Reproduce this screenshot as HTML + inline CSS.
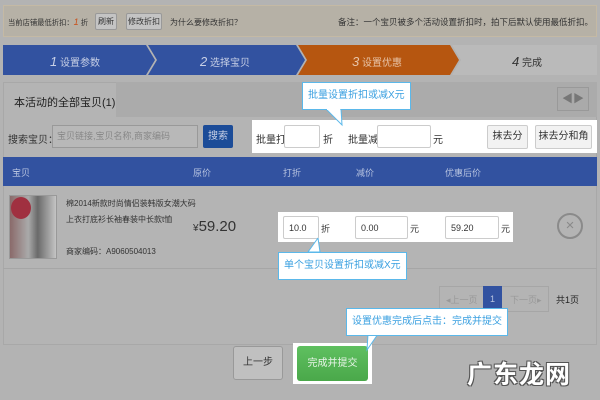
<!DOCTYPE html>
<html><head><meta charset="utf-8"><style>
*{margin:0;padding:0;box-sizing:border-box}
body{width:600px;height:400px;background:#b3b3b3;font-family:"Liberation Sans","Noto Sans CJK SC",sans-serif;font-size:9px;color:#333;position:relative;overflow:hidden}
.a{position:absolute}
.btn{position:absolute;border:1px solid #999;border-radius:2px;background:#c4c4c4;text-align:center;color:#333}
.inp{position:absolute;background:#fff;border:1px solid #ccc;border-radius:2px;font-size:9px;padding-left:5px;line-height:22px}
.tip{position:absolute;background:#fff;border:1px solid #5bb8ea;color:#3aa0e0;font-size:10px;padding:0 5px}
</style></head><body>
<div class="a" style="left:3px;top:5px;width:594px;height:32px;background:#b6b1a6;border:1px solid #c4b9a4"></div>
<div class="a" style="left:8px;top:17px;font-size:7.3px;white-space:nowrap">当前店铺最低折扣：<span style="color:#c8501a;font-style:italic;font-size:9px">1</span> 折</div>
<div class="btn" style="left:95px;top:13px;width:22px;height:17px;font-size:8px;line-height:15px">刷新</div>
<div class="btn" style="left:126px;top:13px;width:36px;height:17px;font-size:8px;line-height:15px">修改折扣</div>
<div class="a" style="left:170px;top:17px;font-size:8px">为什么要修改折扣？</div>
<div class="a" style="left:338px;top:16px;font-size:8.5px">备注：一个宝贝被多个活动设置折扣时，拍下后默认使用最低折扣。</div>
<svg class="a" style="left:3px;top:45px" width="594" height="30">
<polygon points="0,0 143,0 152,15 143,30 0,30" fill="#3252a0"/>
<polygon points="145,0 293,0 302,15 293,30 145,30 154,15" fill="#3252a0"/>
<polygon points="295,0 447,0 456,15 447,30 295,30 304,15" fill="#b65610"/>
<polygon points="449,0 594,0 594,30 449,30 458,15" fill="#bababa"/>
</svg>
<div class="a" style="left:50px;top:54px;color:#c8d0e6;font-size:10px"><i style="font-size:13px">1</i> 设置参数</div>
<div class="a" style="left:200px;top:54px;color:#c8d0e6;font-size:10px"><i style="font-size:13px">2</i> 选择宝贝</div>
<div class="a" style="left:352px;top:54px;color:#e8c4a8;font-size:10px"><i style="font-size:13px">3</i> 设置优惠</div>
<div class="a" style="left:512px;top:54px;color:#333;font-size:10px"><i style="font-size:13px">4</i> 完成</div>
<div class="a" style="left:3px;top:82px;width:594px;height:263px;background:#b4b4b4;border:1px solid #a8a8a8"></div>
<div class="a" style="left:116px;top:82px;width:481px;height:35px;background:#ababab"></div>
<div class="a" style="left:14px;top:94px;font-size:11px;color:#222">本活动的全部宝贝(1)</div>
<div class="a" style="left:557px;top:87px;width:32px;height:24px;border:1px solid #999;background:#aaa;color:#777;font-size:11px;line-height:22px;text-align:center">◀▶</div>
<div class="a" style="left:8px;top:131px;font-size:10px">搜索宝贝：</div>
<div class="a" style="left:52px;top:125px;width:146px;height:23px;border:1px solid #999;background:#b8b8b8;color:#888;font-size:9px;line-height:21px;padding-left:4px">宝贝链接,宝贝名称,商家编码</div>
<div class="a" style="left:203px;top:125px;width:30px;height:23px;background:#1c4c98;color:#c8d0e6;font-size:10px;line-height:23px;text-align:center;border-radius:2px">搜索</div>
<div class="a" style="left:252px;top:120px;width:345px;height:33px;background:#fff"></div>
<div class="a" style="left:256px;top:131px;font-size:10px">批量打</div>
<div class="inp" style="left:284px;top:125px;width:36px;height:23px"></div>
<div class="a" style="left:323px;top:131px;font-size:10px">折</div>
<div class="a" style="left:348px;top:131px;font-size:10px">批量减</div>
<div class="inp" style="left:377px;top:125px;width:54px;height:23px"></div>
<div class="a" style="left:433px;top:131px;font-size:10px">元</div>
<div class="btn" style="left:487px;top:125px;width:41px;height:24px;line-height:22px;font-size:10px;background:#f2f2f2;border-color:#ccc">抹去分</div>
<div class="btn" style="left:535px;top:125px;width:57px;height:24px;line-height:22px;font-size:10px;background:#f2f2f2;border-color:#ccc">抹去分和角</div>
<div class="tip" style="left:302px;top:82px;height:28px;line-height:26px">批量设置折扣或减X元</div>
<svg class="a" style="left:325px;top:109px" width="20" height="18"><polygon points="1,0 16,0 17,16" fill="#fff" stroke="#5bb8ea"/><polygon points="2,-1 15,-1 15,1 2,1" fill="#fff"/></svg>
<div class="a" style="left:3px;top:157px;width:594px;height:29px;background:#3252a0"></div>
<div class="a" style="left:12px;top:166px;color:#b8c4e0;font-size:9px">宝贝</div>
<div class="a" style="left:193px;top:166px;color:#b8c4e0;font-size:9px">原价</div>
<div class="a" style="left:283px;top:166px;color:#b8c4e0;font-size:9px">打折</div>
<div class="a" style="left:356px;top:166px;color:#b8c4e0;font-size:9px">减价</div>
<div class="a" style="left:445px;top:166px;color:#b8c4e0;font-size:9px">优惠后价</div>
<div class="a" style="left:3px;top:268px;width:594px;height:1px;background:#a6a6a6"></div>
<div class="a" style="left:9px;top:195px;width:48px;height:64px;background:linear-gradient(90deg,#8a6a6a,#aaa 40%,#6a6a6a 60%,#c4c4c4);border:1px solid #999"></div>
<div class="a" style="left:11px;top:197px;width:20px;height:22px;background:#a03040;border-radius:50%"></div>
<div class="a" style="left:66px;top:198px;font-size:8px">棉2014新款时尚情侣装韩版女潮大码</div>
<div class="a" style="left:66px;top:214px;font-size:8px">上衣打底衫长袖春装中长款t恤</div>
<div class="a" style="left:66px;top:246px;font-size:8px">商家编码：A9060504013</div>
<div class="a" style="left:193px;top:218px;font-size:15px;color:#333"><span style="font-size:10px">¥</span>59.20</div>
<div class="a" style="left:278px;top:212px;width:235px;height:30px;background:#fff"></div>
<div class="inp" style="left:283px;top:216px;width:36px;height:23px">10.0</div>
<div class="a" style="left:321px;top:222px;font-size:9px">折</div>
<div class="inp" style="left:355px;top:216px;width:53px;height:23px">0.00</div>
<div class="a" style="left:410px;top:222px;font-size:9px">元</div>
<div class="inp" style="left:445px;top:216px;width:54px;height:23px">59.20</div>
<div class="a" style="left:501px;top:222px;font-size:9px">元</div>
<div class="a" style="left:557px;top:213px;width:26px;height:26px;border:2px solid #8a8a8a;border-radius:50%;color:#8a8a8a;font-size:15px;line-height:21px;text-align:center">×</div>
<svg class="a" style="left:304px;top:238px" width="20" height="16"><polygon points="14,0 4,14 16,14" fill="#fff" stroke="#5bb8ea"/></svg>
<div class="tip" style="left:278px;top:252px;height:28px;line-height:26px">单个宝贝设置折扣或减X元</div>
<div class="a" style="left:439px;top:286px;width:110px;height:26px;border:1px solid #a6a6a6"></div>
<div class="a" style="left:446px;top:293px;color:#999;font-size:9px">◂上一页</div>
<div class="a" style="left:483px;top:286px;width:19px;height:26px;background:#3252a0;color:#b8c4e0;text-align:center;line-height:26px;font-size:9px">1</div>
<div class="a" style="left:510px;top:293px;color:#999;font-size:9px">下一页▸</div>
<div class="a" style="left:556px;top:293px;font-size:9px;color:#222">共1页</div>
<div class="btn" style="left:233px;top:346px;width:50px;height:34px;line-height:32px;font-size:10px;background:#c0c0c0;border-radius:3px">上一步</div>
<div class="a" style="left:293px;top:343px;width:79px;height:41px;background:#fff"></div>
<div class="a" style="left:297px;top:346px;width:71px;height:35px;background:linear-gradient(#5fc060,#4aa84a);border-radius:3px;color:#e8f4e8;font-size:10px;text-align:center;line-height:35px">完成并提交</div>
<svg class="a" style="left:364px;top:334px" width="20" height="18"><polygon points="4,0 14,0 3,16" fill="#fff" stroke="#5bb8ea"/></svg>
<div class="tip" style="left:346px;top:308px;height:28px;line-height:26px">设置优惠完成后点击：完成并提交</div>
<div class="a" style="left:467px;top:355px;font-size:25px;font-weight:bold;color:#fff;text-shadow:1px 1px 0 #555,-1px -1px 0 #555,1px -1px 0 #555,-1px 1px 0 #555;font-family:'Noto Sans CJK SC',sans-serif;letter-spacing:1px">广东龙网</div>
</body></html>
